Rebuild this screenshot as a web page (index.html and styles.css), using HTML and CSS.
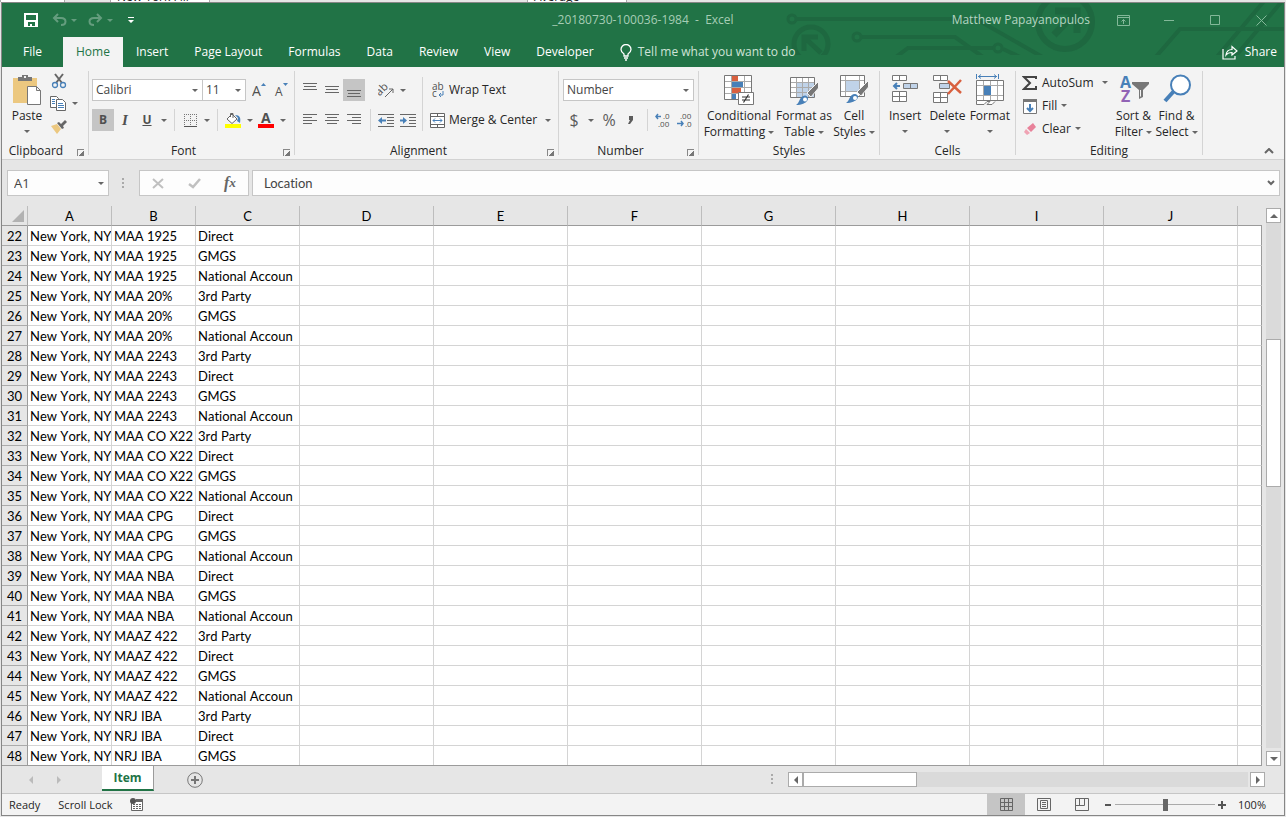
FILE: index.html
```html
<!DOCTYPE html>
<html lang="en">
<head>
    <meta charset="UTF-8">
    <meta name="viewport" content="width=device-width, initial-scale=1.0">
    <title>_20180730-100036-1984 - Excel</title>
    <link rel="stylesheet" href="styles.css">
</head>
<body>

    <div class="behind">
        <span class="behind-cell blank-cell"></span>
        <span class="behind-cell first">New York Fill</span>
        <span class="behind-cell second">Average</span>
    </div>

    <div class="window">
        <header class="top">
            <svg class="circuit" width="500" height="52" viewBox="784 3 500 52" fill="none" stroke="#1e6840" stroke-width="4">
                <circle cx="792" cy="19" r="4" stroke-width="3"/>
                <path d="M796 19H976L1046 59M861 37H955L983 57M896 57L908 48H993M1003 49L1020 57M1154 59L1180 29H1284M1216 58L1265 0M1234 58L1283 0"/>
                <circle cx="857" cy="37" r="4" stroke-width="3"/>
                <circle cx="998" cy="48" r="4" stroke-width="3"/>
                <circle cx="811" cy="44" r="17" stroke-width="5"/>
                <path d="M804 51V37H818M804 37L821 53" stroke-width="5"/>
                <circle cx="1065" cy="22" r="27" stroke-width="6"/>
                <path d="M1055 11H1077V33M1076 12L1054 35" stroke-width="7"/>
            </svg>

            <div class="titlebar">
                <div class="quick">
                    <button class="tb save" aria-label="Save">
                        <svg width="14" height="14" viewBox="0 0 14 14"><path fill="#fff" fill-rule="evenodd" d="M0 0H14V14H0ZM2 2V7H12V2ZM4 9V13H6V11H8V13H11V9Z"/></svg>
                    </button>
                    <button class="tb dim" aria-label="Undo">
                        <svg width="15" height="14" viewBox="0 0 15 14" fill="none" stroke="#fff" stroke-width="2"><path d="M6 1L2 5L6 9M2 5H9C15 5 15 12 9 12"/></svg>
                        <i class="caret light"></i>
                    </button>
                    <button class="tb dim" aria-label="Redo">
                        <svg width="15" height="14" viewBox="0 0 15 14" fill="none" stroke="#fff" stroke-width="2"><path d="M9 1L13 5L9 9M13 5H6C0 5 0 12 6 12"/></svg>
                        <i class="caret light"></i>
                    </button>
                    <button class="tb more" aria-label="Customize Quick Access Toolbar">
                        <svg width="6" height="6" viewBox="0 0 6 6" fill="#fff"><path d="M0 0H6V1H0ZM0 3H6L3 6Z"/></svg>
                    </button>
                </div>
                <div class="doc-title">_20180730-100036-1984 &nbsp;-&nbsp; Excel</div>
                <div class="account">
                    <span class="user">Matthew Papayanopulos</span>
                    <button class="wb" aria-label="Ribbon Display Options"><svg width="13" height="11" viewBox="0 0 13 11" fill="none" stroke="#83b899"><path d="M.5 .5H12.5V10.5H.5ZM.5 2.5H12.5M6.5 9V4.5M4.5 6.5L6.5 4.5L8.5 6.5"/></svg></button>
                    <button class="wb" aria-label="Minimize"><svg width="10" height="11" viewBox="0 0 10 11" stroke="#83b899"><path d="M0 5.5H10"/></svg></button>
                    <button class="wb" aria-label="Maximize"><svg width="10" height="10" viewBox="0 0 10 10" fill="none" stroke="#83b899"><path d="M.5 .5H9.5V9.5H.5Z"/></svg></button>
                    <button class="wb" aria-label="Close"><svg width="11" height="11" viewBox="0 0 11 11" stroke="#83b899"><path d="M.5 .5L10.5 10.5M10.5 .5L.5 10.5"/></svg></button>
                </div>
            </div>

            <nav class="tabs">
                <button class="tab file">File</button>
                <button class="tab active">Home</button>
                <button class="tab">Insert</button>
                <button class="tab">Page Layout</button>
                <button class="tab">Formulas</button>
                <button class="tab">Data</button>
                <button class="tab">Review</button>
                <button class="tab">View</button>
                <button class="tab">Developer</button>
                <button class="tab tell">
                    <svg width="12" height="17" viewBox="0 0 12 17" fill="none" stroke="#fff" stroke-width="1.3"><path d="M4 12V10C2 8.500 1 7.500 1 5.500A5 5 0 0 1 11 5.500C11 7.500 10 8.500 8 10V12ZM4 14H8M5 16H7"/></svg>
                    Tell me what you want to do
                </button>
                <button class="tab share">
                    <svg width="16" height="15" viewBox="0 0 16 15" fill="none" stroke="#fff" stroke-width="1.200"><path d="M1 4V14H13V11M4 10C4.500 6 7 4.500 10 4.500V1.500L15 6L10 10V7.500C7.500 7.500 5.500 8 4 10Z"/></svg>
                    Share
                </button>
            </nav>
        </header>

        <section class="ribbon">
            <div class="group clipboard">
                <div class="group-body">
                    <button class="big paste">
                        <svg width="30" height="32" viewBox="0 0 30 32">
                            <path fill="#ecc880" d="M1 4H25V29H1Z"/>
                            <path fill="#777" d="M6 3H10V1H16V3H20V7H6Z"/><path fill="#f3f3f3" d="M12 2H14V4H12Z"/>
                            <path fill="#fff" stroke="#777" d="M15.500 12.500H24.500L28.500 16.500V30.500H15.500ZM24.500 12.500V16.500H28.500"/>
                        </svg>
                        <span>Paste</span>
                        <i class="caret"></i>
                    </button>
                    <div class="stack">
                        <button class="ic" aria-label="Cut"><svg width="16" height="16" viewBox="0 0 16 16" fill="none"><path d="M4 1L11 10M12 1L5 10" stroke="#666" stroke-width="2"/><circle cx="4" cy="12" r="2.500" stroke="#4880b8" stroke-width="1.300"/><circle cx="12" cy="12" r="2.500" stroke="#4880b8" stroke-width="1.300"/></svg></button>
                        <button class="ic wide" aria-label="Copy"><svg width="16" height="15" viewBox="0 0 16 15"><path fill="#fff" stroke="#666" d="M.5 .5H6.500L8.500 2.500V11.500H.5Z"/><path fill="#fff" stroke="#666" d="M6.500 3.500H12.500L15.500 6.500V14.500H6.500Z"/><path stroke="#4880b8" d="M2 3.500H5M2 5.500H5M2 7.500H5M8 7.500H13M8 9.500H14M8 11.500H14"/></svg><i class="caret"></i></button>
                        <button class="ic" aria-label="Format Painter"><svg width="16" height="14" viewBox="0 0 16 14"><path fill="#ecc880" d="M0 6L6 4L10 9L6 14Z"/><path fill="#666" d="M6 3L8 2L10 4L14 0L16 2L12 6L13 8L11 9Z"/></svg></button>
                    </div>
                </div>
                <div class="label">Clipboard<i class="launch"></i></div>
            </div>

            <div class="group font">
                <div class="group-body rows">
                    <div class="row">
                        <select class="combo font-name" aria-label="Font"><option>Calibri</option></select>
                        <select class="combo font-size" aria-label="Font size"><option>11</option></select>
                        <button class="ic grow" aria-label="Increase Font Size"><svg width="14" height="16" viewBox="0 0 14 16"><text class="glyph" x="0" y="14" font-size="14">A</text><path fill="#4880b8" d="M9 4L11.500 1L14 4Z"/></svg></button>
                        <button class="ic" aria-label="Decrease Font Size"><svg width="14" height="16" viewBox="0 0 14 16"><text class="glyph" x="1" y="14" font-size="12">A</text><path fill="#4880b8" d="M9 1H14L11.500 4Z"/></svg></button>
                    </div>
                    <div class="row">
                        <button class="ic on bold" aria-label="Bold">B</button>
                        <button class="ic italic" aria-label="Italic">I</button>
                        <button class="ic underline" aria-label="Underline">U</button>
                        <button class="drop" aria-label="Underline options"><i class="caret"></i></button>
                        <i class="vsep"></i>
                        <button class="ic" aria-label="Borders"><svg width="13" height="13" viewBox="0 0 13 13" stroke="#777"><path stroke-dasharray="1 1" d="M0 .5H13M0 6.500H13M.5 0V12M6.500 0V12M12.500 0V12"/><path stroke="#555" d="M0 12.500H13"/></svg></button>
                        <button class="drop" aria-label="Border options"><i class="caret"></i></button>
                        <i class="vsep"></i>
                        <button class="ic" aria-label="Fill Color"><svg width="16" height="16" viewBox="0 0 16 16"><path fill="#fff" stroke="#666" d="M2 7L7 2L12 7L7 11.500Z"/><path fill="none" stroke="#666" d="M5.500 5V1.500H8V6"/><path fill="#4880b8" d="M10 3C15 3 16 6 15 11L12 9L13 6Z"/><path fill="#ff0" d="M0 12H16V16H0Z"/></svg></button>
                        <button class="drop" aria-label="Fill color options"><i class="caret"></i></button>
                        <button class="ic" aria-label="Font Color"><svg width="16" height="16" viewBox="0 0 16 16"><text class="glyph" x="3" y="11" font-size="14" font-weight="bold">A</text><path fill="#f00" d="M0 12H16V16H0Z"/></svg></button>
                        <button class="drop" aria-label="Font color options"><i class="caret"></i></button>
                    </div>
                </div>
                <div class="label">Font<i class="launch"></i></div>
            </div>

            <div class="group alignment">
                <div class="group-body">
                    <div class="rows">
                        <div class="row">
                            <button class="ic" aria-label="Top Align"><svg width="14" height="16" viewBox="0 0 14 16" stroke="#666"><path d="M0 1.500H14M1 4.500H13M0 7.500H14"/></svg></button>
                            <button class="ic" aria-label="Middle Align"><svg width="14" height="16" viewBox="0 0 14 16" stroke="#666"><path d="M0 4.500H14M1 7.500H13M0 10.500H14"/></svg></button>
                            <button class="ic on" aria-label="Bottom Align"><svg width="14" height="16" viewBox="0 0 14 16" stroke="#666"><path d="M0 8.500H14M1 11.500H13M0 14.500H14"/></svg></button>
                            <i class="vsep blank"></i>
                            <button class="ic" aria-label="Orientation"><svg width="17" height="16" viewBox="0 0 17 16"><text class="glyph" x="1" y="13" transform="rotate(-45 3 13)" font-size="11">ab</text><path d="M7 15L15 7M15 11V7H11" fill="none" stroke="#666"/></svg></button>
                            <button class="drop" aria-label="Orientation options"><i class="caret"></i></button>
                        </div>
                        <div class="row">
                            <button class="ic" aria-label="Align Left"><svg width="14" height="12" viewBox="0 0 14 12" stroke="#666"><path d="M0 .5H14M0 3.500H9M0 6.500H14M0 9.500H9"/></svg></button>
                            <button class="ic" aria-label="Center"><svg width="14" height="12" viewBox="0 0 14 12" stroke="#666"><path d="M0 .5H14M2 3.500H12M0 6.500H14M2 9.500H12"/></svg></button>
                            <button class="ic" aria-label="Align Right"><svg width="14" height="12" viewBox="0 0 14 12" stroke="#666"><path d="M0 .5H14M5 3.500H14M0 6.500H14M5 9.500H14"/></svg></button>
                            <i class="vsep"></i>
                            <button class="ic" aria-label="Decrease Indent"><svg width="16" height="13" viewBox="0 0 16 13" stroke="#666"><path d="M0 .5H16M9 3.500H16M9 6.500H16M9 9.500H16M0 12.500H16"/><path d="M2 6.500H8" stroke="#4880b8" stroke-width="2"/><path d="M0 6.500L4 3V10Z" fill="#4880b8" stroke="none"/></svg></button>
                            <button class="ic" aria-label="Increase Indent"><svg width="16" height="13" viewBox="0 0 16 13" stroke="#666"><path d="M0 .5H16M9 3.500H16M9 6.500H16M9 9.500H16M0 12.500H16"/><path d="M0 6.500H5" stroke="#4880b8" stroke-width="2"/><path d="M7 6.500L3 3V10Z" fill="#4880b8" stroke="none"/></svg></button>
                        </div>
                    </div>
                    <i class="vsep tall"></i>
                    <div class="rows">
                        <button class="text-btn">
                            <svg width="15" height="16" viewBox="0 0 15 16"><text class="glyph" x="2" y="8" font-size="10">ab</text><text class="glyph" x="2" y="15" font-size="10">c</text><path d="M13 9V13H9M11 11L9 13L11 15" fill="none" stroke="#4880b8"/></svg>
                            Wrap Text
                        </button>
                        <button class="text-btn">
                            <svg width="15" height="15" viewBox="0 0 15 15" fill="none" stroke="#666"><path fill="#fff" d="M.5 .5H14.500V14.500H.5Z"/><path d="M.5 3.500H14.500M.5 11.500H14.500M7.500 .5V3.500M7.500 11.500V14.500"/><path stroke="#4880b8" d="M3 7.500H12M5 5.500L3 7.500L5 9.500M10 5.500L12 7.500L10 9.500"/></svg>
                            Merge &amp; Center
                            <i class="caret far"></i>
                        </button>
                    </div>
                </div>
                <div class="label">Alignment<i class="launch"></i></div>
            </div>

            <div class="group number">
                <div class="group-body rows">
                    <div class="row">
                        <select class="combo number-format" aria-label="Number format"><option>Number</option></select>
                    </div>
                    <div class="row">
                        <button class="ic sym" aria-label="Accounting Number Format">$</button>
                        <button class="drop" aria-label="Accounting options"><i class="caret"></i></button>
                        <button class="ic sym pct" aria-label="Percent Style">%</button>
                        <button class="ic sym comma" aria-label="Comma Style"><svg width="6" height="9" viewBox="0 0 6 9"><path fill="#5c5c5c" d="M1 0H5V4L2 8H0L2 4H1Z"/></svg></button>
                        <i class="vsep"></i>
                        <button class="ic" aria-label="Increase Decimal"><svg width="16" height="14" viewBox="0 0 16 14"><text class="glyph" x="8" y="6" font-size="8">.0</text><text class="glyph" x="3" y="14" font-size="8">.00</text><path d="M1 3.500H6M3 1L1 3.500L3 6" fill="none" stroke="#4880b8" stroke-width="1.500"/></svg></button>
                        <button class="ic" aria-label="Decrease Decimal"><svg width="16" height="14" viewBox="0 0 16 14"><text class="glyph" x="3" y="6" font-size="8">.00</text><text class="glyph" x="8" y="14" font-size="8">.0</text><path d="M0 10.500H6M4 8L6 10.500L4 13" fill="none" stroke="#4880b8" stroke-width="1.500"/></svg></button>
                    </div>
                </div>
                <div class="label">Number<i class="launch"></i></div>
            </div>

            <div class="group styles">
                <div class="group-body">
                    <button class="big cond">
                        <svg width="30" height="32" viewBox="0 0 30 32">
                            <path fill="#fff" stroke="#777" d="M.5 1.500H27.500V25.500H.5Z"/><path stroke="#aaa" d="M7.500 2V25M20.500 2V25M1 7.500H27M1 13.500H27M1 19.500H27"/>
                            <path fill="#d9603f" d="M8 2H14V7H8ZM8 14H17V19H8Z"/><path fill="#4880b8" d="M8 8H19V13H8ZM8 20H12V25H8Z"/>
                            <path fill="#fff" stroke="#777" d="M14.500 18.500H29.500V30.500H14.500Z"/><path stroke="#333" stroke-width="1.200" d="M18 23H26M18 26H26M24.500 20.500L19.500 28.500"/>
                        </svg>
                        <span>Conditional<br>Formatting <i class="caret"></i></span>
                    </button>
                    <button class="big fmt-table">
                        <svg width="30" height="32" viewBox="0 0 30 32">
                            <path fill="#fff" stroke="#777" d="M1.500 3.500H25.500V23.500H1.500Z"/><path fill="#c0d3e9" d="M8 9H25V23H8Z"/><path stroke="#aaa" d="M7.500 4V23M13.500 4V23M19.500 4V23M2 8.500H25M2 13.500H25M2 18.500H25"/>
                            <path fill="#777" stroke="#f3f3f3" d="M29.500 7.500V14L22 23L18 19Z"/><path fill="#4880b8" d="M7 31C11 29 10 22 16 21.500C22 23 19 31 7 31Z"/><circle cx="16" cy="25.500" r="2" fill="#fff"/>
                        </svg>
                        <span>Format as<br>Table <i class="caret"></i></span>
                    </button>
                    <button class="big cell-styles">
                        <svg width="30" height="32" viewBox="0 0 30 32">
                            <path fill="#fff" stroke="#777" d="M1.500 1.500H25.500V22.500H1.500Z"/><path stroke="#aaa" d="M6.500 2V22M20.500 2V22M2 6.500H25M2 17.500H25"/><path fill="#c0d3e9" d="M7 7H20V17H7Z"/>
                            <path fill="#777" stroke="#f3f3f3" d="M29.500 6.500V13L22 22L18 18Z"/><path fill="#4880b8" d="M7 29C11 27 10 20 16 20C22 21 19 29 7 29Z"/><circle cx="16" cy="24" r="2" fill="#fff"/>
                        </svg>
                        <span>Cell<br>Styles <i class="caret"></i></span>
                    </button>
                </div>
                <div class="label">Styles</div>
            </div>

            <div class="group cells">
                <div class="group-body">
                    <button class="big">
                        <svg width="28" height="32" viewBox="0 0 28 32" fill="#fff" stroke="#777"><path d="M1.500 1.500H15.500V6.500H1.500ZM8.500 1.500V6.500M1.500 17.500H15.500V27.500H1.500ZM8.500 17.500V27.500M1.500 22.500H15.500"/><path fill="#c0d3e9" d="M12.500 9.500H26.500V14.500H12.500ZM19.500 9.500V14.500"/><path d="M3 12H9M6 9L3 12L6 15" fill="none" stroke="#4880b8" stroke-width="2"/></svg>
                        <span>Insert</span>
                        <i class="caret"></i>
                    </button>
                    <button class="big">
                        <svg width="30" height="32" viewBox="0 0 30 32" fill="#fff" stroke="#777"><path d="M1.500 1.500H15.500V6.500H1.500ZM8.500 1.500V6.500M1.500 18.500H15.500V28.500H1.500ZM8.500 18.500V28.500M1.500 23.500H15.500"/><path fill="#c0d3e9" d="M7.500 9.500H17.500V14.500H7.500Z"/><path d="M16 7L29 19M29 6L16 20" stroke="#d9603f" stroke-width="2.500"/></svg>
                        <span>Delete</span>
                        <i class="caret"></i>
                    </button>
                    <button class="big">
                        <svg width="28" height="32" viewBox="0 0 28 32" fill="#fff" stroke="#777"><path d="M.5 6.500H27.500V26.500H.5Z"/><path stroke="#aaa" d="M7.500 7V26M14.500 7V26M21.500 7V26M1 11.500H27M1 21.500H27"/><path fill="#4880b8" stroke="none" d="M8 12H15V21H8Z"/><path d="M.5 27V30.500H8L11 27.500H14L11 30.500H16L19 27.500"/><path stroke="#4880b8" fill="none" d="M.5 0V5M22.500 0V5M2 2.500H21M5 .5L2.500 2.500L5 4.500M18 .5L20.500 2.500L18 4.500"/></svg>
                        <span>Format</span>
                        <i class="caret"></i>
                    </button>
                </div>
                <div class="label">Cells</div>
            </div>

            <div class="group editing">
                <div class="group-body">
                    <div class="edits">
                        <button class="text-btn"><svg width="16" height="16" viewBox="0 0 16 16"><path d="M14 4V2H2L8 8L2 14H14V11" fill="none" stroke="#444" stroke-width="2"/></svg>AutoSum<i class="caret far"></i></button>
                        <button class="text-btn"><svg width="16" height="16" viewBox="0 0 16 16"><path fill="#fff" stroke="#777" d="M1.500 1.500H14.500V15.500H1.500Z"/><path fill="#777" d="M1 1H15V4H1Z"/><path d="M8 6V13M5 10L8 13L11 10" fill="none" stroke="#4880b8" stroke-width="2"/></svg>Fill<i class="caret"></i></button>
                        <button class="text-btn"><svg width="16" height="16" viewBox="0 0 16 16"><path fill="#e8829a" d="M5 7L11 2L14 6L9 11Z"/><path fill="#f0a3b4" d="M4 8L8 12L5 14L2 11Z"/></svg>Clear<i class="caret"></i></button>
                    </div>
                    <button class="big sort">
                        <svg width="30" height="32" viewBox="0 0 30 32"><text x="1" y="14" font-size="16" font-weight="bold" fill="#4880b8">A</text><text x="2" y="28" font-size="16" font-weight="bold" fill="#9163b5">Z</text><path fill="#777" d="M13 8H30V10L24 16V23L20 25V16L13 10Z"/><path fill="#f3f3f3" d="M21 16H22V22L21 23Z"/></svg>
                        <span>Sort &amp;<br>Filter <i class="caret"></i></span>
                    </button>
                    <button class="big find">
                        <svg width="28" height="32" viewBox="0 0 28 32" fill="none" stroke="#4880b8"><circle cx="17.500" cy="11" r="9.500" fill="#fff" stroke-width="2"/><path d="M11 17L2 27" stroke-width="4"/></svg>
                        <span>Find &amp;<br>Select <i class="caret"></i></span>
                    </button>
                </div>
                <div class="label">Editing</div>
            </div>

            <button class="collapse" aria-label="Collapse the Ribbon"><svg width="10" height="6" viewBox="0 0 10 6" fill="none" stroke="#666" stroke-width="2"><path d="M1 5L5 1L9 5"/></svg></button>
        </section>

        <div class="formula-bar">
            <select class="name-box" aria-label="Name Box"><option>A1</option></select>
            <svg class="grip" width="3" height="11" viewBox="0 0 3 11" fill="#aaa"><path d="M0 0H2V2H0ZM0 4H2V6H0ZM0 8H2V10H0Z"/></svg>
            <div class="fx">
                <button aria-label="Cancel"><svg width="12" height="11" viewBox="0 0 12 11" stroke="#c0c0c0" stroke-width="2"><path d="M1 1L11 10M11 1L1 10"/></svg></button>
                <button aria-label="Enter"><svg width="13" height="11" viewBox="0 0 13 11" fill="none" stroke="#c0c0c0" stroke-width="2.500"><path d="M1 6L5 9L12 1"/></svg></button>
                <button class="fx-btn" aria-label="Insert Function">f<small>x</small></button>
            </div>
            <div class="formula">
                <input type="text" value="Location" aria-label="Formula bar">
                <button aria-label="Expand Formula Bar"><svg width="8" height="6" viewBox="0 0 8 6" fill="none" stroke="#666" stroke-width="2"><path d="M1 1L4 4L7 1"/></svg></button>
            </div>
        </div>

        <main class="work">
            <div class="sheet">
                <table>
                    <colgroup>
                        <col class="c-head"><col class="c-a"><col class="c-b"><col class="c-c">
                        <col class="c-std"><col class="c-std"><col class="c-std"><col class="c-std"><col class="c-std"><col class="c-std"><col class="c-std">
                        <col>
                    </colgroup>
                    <thead>
                        <tr>
                            <th class="corner"><svg width="12" height="12" viewBox="0 0 12 12"><path fill="#b2b2b2" d="M12 0V12H0Z"/></svg></th>
                            <th>A</th><th>B</th><th>C</th><th>D</th><th>E</th><th>F</th><th>G</th><th>H</th><th>I</th><th>J</th><th></th>
                        </tr>
                    </thead>
                    <tbody id="rows"></tbody>
                </table>
            </div>
            <div class="vscroll">
                <button aria-label="Scroll up"><i class="arrow up"></i></button>
                <div class="track"><div class="thumb"></div></div>
                <button aria-label="Scroll down"><i class="arrow down"></i></button>
            </div>
        </main>

        <div class="sheet-bar">
            <button class="nav-btn" aria-label="Previous sheet"><i class="arrow left pale"></i></button>
            <button class="nav-btn" aria-label="Next sheet"><i class="arrow right pale"></i></button>
            <button class="sheet-tab">Item</button>
            <button class="add" aria-label="New sheet"><svg width="16" height="16" viewBox="0 0 16 16" fill="none" stroke="#777"><circle cx="8" cy="8" r="7.300"/><path d="M8 4V12M4 8H12" stroke-width="2"/></svg></button>
            <svg class="grip split" width="3" height="11" viewBox="0 0 3 11" fill="#aaa"><path d="M0 0H2V2H0ZM0 4H2V6H0ZM0 8H2V10H0Z"/></svg>
            <div class="hscroll">
                <button aria-label="Scroll left"><i class="arrow left"></i></button>
                <div class="track"><div class="thumb"></div></div>
                <button aria-label="Scroll right"><i class="arrow right"></i></button>
            </div>
        </div>

        <footer class="status">
            <span class="ready">Ready</span>
            <span>Scroll Lock</span>
            <button class="macro" aria-label="Record Macro"><svg width="13" height="13" viewBox="0 0 13 13"><path fill="#fff" stroke="#666" d="M1.500 2.500H12.500V12.500H1.500Z"/><path fill="#666" d="M6 1H13V4H6Z"/><path stroke="#666" stroke-dasharray="2 1" d="M3 6.500H11M3 8.500H11M3 10.500H11"/><circle cx="3" cy="3" r="3" fill="#555"/></svg></button>
            <div class="views">
                <button class="view on" aria-label="Normal"><svg width="13" height="13" viewBox="0 0 13 13" fill="none" stroke="#666"><path d="M.5 .5H12.500V12.500H.5ZM4.500 0V13M8.500 0V13M0 4.500H13M0 8.500H13"/></svg></button>
                <button class="view" aria-label="Page Layout"><svg width="14" height="13" viewBox="0 0 14 13" fill="none" stroke="#666"><path d="M.5 .5H13.500V12.500H.5ZM3.500 2.500H10.500V10.500H3.500ZM5 4.500H9M5 6.500H9M5 8.500H9"/></svg></button>
                <button class="view" aria-label="Page Break Preview"><svg width="14" height="13" viewBox="0 0 14 13" fill="none" stroke="#666"><path d="M.5 .5H13.500V12.500H.5ZM4.500 0V7M9.500 0V7.500H0"/></svg></button>
            </div>
            <button class="zoom-btn" aria-label="Zoom out"><svg width="6" height="8" viewBox="0 0 6 8"><path fill="#555" d="M0 3H6V5H0Z"/></svg></button>
            <input class="zoom" type="range" min="0" max="100" value="50" aria-label="Zoom">
            <button class="zoom-btn" aria-label="Zoom in"><svg width="8" height="8" viewBox="0 0 8 8"><path fill="#555" d="M0 3H3V0H5V3H8V5H5V8H3V5H0Z"/></svg></button>
            <span class="percent">100%</span>
        </footer>
    </div>

    <script>
        const rows = [
            ["MAA 1925", "Direct"],
            ["MAA 1925", "GMGS"],
            ["MAA 1925", "National Accoun"],
            ["MAA 20%", "3rd Party"],
            ["MAA 20%", "GMGS"],
            ["MAA 20%", "National Accoun"],
            ["MAA 2243", "3rd Party"],
            ["MAA 2243", "Direct"],
            ["MAA 2243", "GMGS"],
            ["MAA 2243", "National Accoun"],
            ["MAA CO X22", "3rd Party"],
            ["MAA CO X22", "Direct"],
            ["MAA CO X22", "GMGS"],
            ["MAA CO X22", "National Accoun"],
            ["MAA CPG", "Direct"],
            ["MAA CPG", "GMGS"],
            ["MAA CPG", "National Accoun"],
            ["MAA NBA", "Direct"],
            ["MAA NBA", "GMGS"],
            ["MAA NBA", "National Accoun"],
            ["MAAZ 422", "3rd Party"],
            ["MAAZ 422", "Direct"],
            ["MAAZ 422", "GMGS"],
            ["MAAZ 422", "National Accoun"],
            ["NRJ IBA", "3rd Party"],
            ["NRJ IBA", "Direct"],
            ["NRJ IBA", "GMGS"]
        ];
        const firstRow = 22;
        const body = document.getElementById("rows");

        rows.forEach((row, i) => {
            const tr = document.createElement("tr");
            tr.innerHTML = `<th>${firstRow + i}</th><td>New York, NY</td><td>${row[0]}</td><td>${row[1]}</td>` + "<td></td>".repeat(8);
            body.appendChild(tr);
        });
    </script>

</body>
</html>
```
FILE: styles.css
```css
* {
    box-sizing: border-box;
}

body {
    margin: 0;
    height: 100vh;
    display: flex;
    flex-direction: column;
    overflow: hidden;
    background-color: #e6e6e6;
    font-family: "Open Sans", "Noto Sans", sans-serif;
    font-size: 12px;
    line-height: 16px;
    color: #262626;
}

button {
    display: flex;
    align-items: center;
    justify-content: center;
    padding: 0;
    border: none;
    background: none;
    font: inherit;
    color: inherit;
    white-space: nowrap;
}

svg {
    display: block;
    flex: none;
}

.glyph {
    fill: #505050;
}

/* sliver of the workbook behind the window */
.behind {
    display: flex;
    align-items: flex-end;
    height: 2px;
    flex: none;
    overflow: hidden;
}

.behind-cell {
    flex: none;
    width: 100px;
    height: 16px;
    margin-bottom: -3px;
    padding-left: 6px;
    background-color: #fff;
    border-left: 1px solid #aaa;
    border-right: 1px solid #aaa;
}

.blank-cell {
    width: 65px;
}

.first {
    margin-left: 45px;
}

.second {
    margin-left: 317px;
}

.window {
    flex: 1;
    min-height: 0;
    display: flex;
    flex-direction: column;
    margin: 0 1px 1px 1px;
    border: 1px solid #868686;
    background-color: #e6e6e6;
}

/* title bar and tabs */
.top {
    position: relative;
    flex: none;
    background-color: #217346;
    color: #fff;
}

.circuit {
    position: absolute;
    top: 0;
    right: 0;
}

.titlebar {
    position: relative;
    display: grid;
    grid-template-columns: 1fr auto 1fr;
    align-items: center;
    height: 34px;
}

.quick {
    display: flex;
    align-items: center;
    gap: 11px;
    padding-left: 22px;
}

.save {
    margin-right: 3px;
}

.tb {
    gap: 4px;
}

.dim {
    opacity: 0.3;
}

.more {
    margin-left: 4px;
}

.doc-title {
    color: #a6cdb5;
}

.account {
    display: flex;
    align-items: center;
    justify-content: flex-end;
    color: #b5d5c2;
}

.user {
    margin-right: 10px;
}

.wb {
    width: 46px;
    height: 30px;
}

.tabs {
    position: relative;
    display: flex;
    height: 30px;
}

.tab {
    padding: 0 13px;
}

.file {
    width: 61px;
}

.active {
    background-color: #f3f3f3;
    color: #217346;
}

.tell {
    gap: 6px;
    color: #cfe3d7;
}

.share {
    gap: 7px;
    margin-left: auto;
    padding: 0 7px;
}

/* ribbon */
.ribbon {
    display: flex;
    flex: none;
    height: 93px;
    padding: 4px 0;
    background-color: #f3f3f3;
    border-bottom: 1px solid #d2d2d2;
}

.group {
    display: flex;
    flex-direction: column;
    flex: none;
    border-right: 1px solid #d4d4d4;
}

.group-body {
    display: flex;
    flex: 1;
}

.label {
    position: relative;
    height: 16px;
    margin-bottom: -4px;
    text-align: center;
}

.clipboard { width: 87px; }
.font { width: 206px; }
.alignment { width: 264px; }
.number { width: 140px; }
.styles { width: 181px; }
.cells { width: 136px; }
.editing { width: 187px; }

.clipboard .label {
    padding-right: 18px;
}

.font .label,
.alignment .label,
.number .label {
    padding-right: 16px;
}

.launch {
    position: absolute;
    right: 4px;
    top: 6px;
    width: 7px;
    height: 7px;
    border-left: 1px solid #888;
    border-top: 1px solid #888;
    background: linear-gradient(135deg, transparent 55%, #777 55%);
}

.caret {
    display: inline-block;
    flex: none;
    width: 0;
    height: 0;
    border-left: 3px solid transparent;
    border-right: 3px solid transparent;
    border-top: 3px solid #666;
    vertical-align: middle;
}

.light {
    border-top-color: #fff;
}

.big {
    flex-direction: column;
    justify-content: flex-start;
    flex: 1 1 0;
    padding-top: 3px;
}

.big span {
    margin-top: 2px;
}

.big > .caret {
    margin-top: 6px;
}

.paste {
    flex: none;
    width: 50px;
}

.cond { flex: none; width: 80px; }
.fmt-table { flex: none; width: 50px; }
.cell-styles { flex: none; width: 50px; }

.stack {
    display: flex;
    flex-direction: column;
    margin: -2px 0 0 -4px;
}

.ic {
    flex: none;
    width: 22px;
    height: 22px;
}

.stack .ic {
    height: 23px;
}

.stack .wide {
    width: 32px;
    gap: 6px;
}

.on {
    background-color: #c5c5c5;
}

.drop {
    width: 11px;
    height: 22px;
}

.vsep {
    flex: none;
    width: 1px;
    height: 22px;
    margin: 0 4px 0 5px;
    background-color: #d4d4d4;
}

.blank {
    background: none;
}

.rows {
    display: flex;
    flex-direction: column;
    gap: 8px;
    padding: 8px 0 0 4px;
}

.font .rows {
    padding-left: 3px;
}

.row {
    display: flex;
    height: 22px;
}

.combo,
.name-box {
    appearance: none;
    height: 22px;
    padding: 0 3px;
    border: 1px solid #c6c6c6;
    border-radius: 0;
    color: #444;
    font: inherit;
    background: #fff url("data:image/svg+xml,%3Csvg xmlns='http://www.w3.org/2000/svg' width='6' height='3'%3E%3Cpath fill='%23666' d='M0 0H6L3 3Z'/%3E%3C/svg%3E") no-repeat right 4px center;
}

.font-name { width: 111px; }
.font-size { width: 43px; border-left: none; }
.number-format { width: 131px; }

.grow {
    margin-left: 2px;
}

.bold,
.underline {
    font-weight: bold;
    color: #505050;
}

.underline {
    text-decoration: underline;
}

.italic {
    font-family: "Liberation Serif", serif;
    font-size: 15px;
    font-style: italic;
    font-weight: bold;
    color: #505050;
}

.tall {
    height: 54px;
    margin: 6px 3px 0 3px;
}

.text-btn {
    justify-content: flex-start;
    height: 22px;
    gap: 4px;
}

.far {
    margin-left: 4px;
}

.sym {
    font-size: 16px;
    color: #5c5c5c;
}

.pct {
    margin-left: 2px;
}

.cells .group-body {
    padding: 0 4px;
}

.edits {
    width: 94px;
    padding-left: 6px;
}

.edits .text-btn {
    height: 23px;
}

.sort,
.find {
    flex: none;
    width: 43px;
}

.sort {
    margin-left: 2px;
}

.collapse {
    align-self: flex-end;
    width: 10px;
    margin: 0 10px -2px auto;
    height: 12px;
}

/* formula bar */
.formula-bar {
    display: flex;
    flex: none;
    padding: 10px 4px 10px 5px;
    align-items: center;
}

.name-box {
    width: 102px;
    height: 26px;
    padding: 0 6px;
    background-color: #fdfdfd;
    font-size: 13px;
}

.grip {
    margin: 0 14px 0 13px;
}

.fx {
    display: flex;
    width: 110px;
    height: 26px;
    border: 1px solid #c6c6c6;
    background-color: #fdfdfd;
}

.fx button {
    flex: 1;
}

.fx-btn {
    font-family: "Liberation Serif", serif;
    font-size: 16px;
    font-style: italic;
    font-weight: bold;
    color: #666;
}

.formula {
    display: flex;
    flex: 1;
    height: 26px;
    margin-left: 3px;
    border: 1px solid #c6c6c6;
    background-color: #fdfdfd;
}

.formula input {
    flex: 1;
    padding: 0 11px;
    border: none;
    background: none;
    font-family: Lato, sans-serif;
    font-size: 13px;
    font-variant-ligatures: none;
    color: #444;
}

.formula button {
    width: 16px;
}

/* grid */
.work {
    display: flex;
    flex: 1;
    min-height: 0;
}

.sheet {
    flex: 1;
    overflow: hidden;
    border-bottom: 1px solid #9b9b9b;
}

table {
    width: 100%;
    table-layout: fixed;
    border-collapse: separate;
    border-spacing: 0;
    font-family: Lato, "Open Sans", sans-serif;
    font-size: 13px;
    font-kerning: none;
    font-variant-ligatures: none;
    color: #000;
}

.c-head { width: 26px; }
.c-a, .c-b { width: 84px; }
.c-c { width: 104px; }
.c-std { width: 134px; }

th,
td {
    height: 20px;
    padding: 1px 0 0;
    line-height: 18px;
    overflow: hidden;
    white-space: nowrap;
}

th {
    font-weight: normal;
    text-align: center;
}

thead th {
    border-bottom: 1px solid #9b9b9b;
    border-right: 1px solid #bdbdbd;
}

thead th:last-child {
    border-right: none;
}

.corner svg {
    margin-left: 10px;
}

tbody th {
    border-right: 1px solid #9b9b9b;
    border-bottom: 1px solid #ababab;
}

td {
    padding-left: 2px;
    background-color: #fff;
    border-right: 1px solid #d4d4d4;
    border-bottom: 1px solid #d4d4d4;
}

td:last-child {
    border-right-color: #9b9b9b;
}

.vscroll {
    display: flex;
    flex-direction: column;
    width: 15px;
    margin: 2px 3px 0 4px;
}

.vscroll button,
.hscroll button {
    flex: none;
    width: 15px;
    height: 15px;
    border: 1px solid #ababab;
    background-color: #fff;
}

.track {
    flex: 1;
    background-color: #dadada;
}

.thumb {
    background-color: #fff;
    border: 1px solid #ababab;
}

.vscroll .track {
    padding-top: 116px;
    margin-bottom: 3px;
}

.vscroll .thumb {
    height: 148px;
}

.arrow {
    width: 0;
    height: 0;
    border: 4px solid transparent;
}

.up { border-top: none; border-bottom-color: #666; }
.down { border-bottom: none; border-top-color: #666; }
.left { border-left: none; border-right-color: #666; }
.right { border-right: none; border-left-color: #666; }
.pale.left { border-right-color: #bbb; }
.pale.right { border-left-color: #bbb; }

/* sheet tabs */
.sheet-bar {
    display: flex;
    flex: none;
    height: 27px;
    padding: 0 19px 0 15px;
    align-items: center;
}

.nav-btn {
    width: 28px;
    height: 26px;
}

.sheet-tab {
    align-self: flex-start;
    width: 52px;
    height: 25px;
    margin-left: 29px;
    background-color: #fff;
    border-right: 1px solid #9b9b9b;
    border-bottom: 2px solid #217346;
    font-weight: bold;
    color: #217346;
}

.add {
    margin-left: 33px;
}

.split {
    margin-left: auto;
}

.hscroll {
    display: flex;
    width: 477px;
}

.hscroll .track {
    margin-right: 2px;
}

.hscroll .thumb {
    width: 114px;
    height: 15px;
}

/* status bar */
.status {
    display: flex;
    flex: none;
    align-items: center;
    height: 22px;
    padding: 0 18px 0 7px;
    border-top: 1px solid #c6c6c6;
    background-color: #f3f3f3;
    font-size: 11px;
}

.ready {
    margin-right: 18px;
}

.macro {
    margin-left: 17px;
}

.views {
    display: flex;
    align-self: stretch;
    margin-left: auto;
}

.view {
    width: 38px;
}

.zoom-btn {
    width: 14px;
}

.zoom {
    appearance: none;
    width: 100px;
    height: 12px;
    margin: 0;
    background: linear-gradient(#aaa, #aaa) no-repeat center / 100% 1px;
}

.zoom::-webkit-slider-thumb {
    appearance: none;
    width: 5px;
    height: 12px;
    background-color: #666;
}

.percent {
    margin-left: 9px;
}
```
